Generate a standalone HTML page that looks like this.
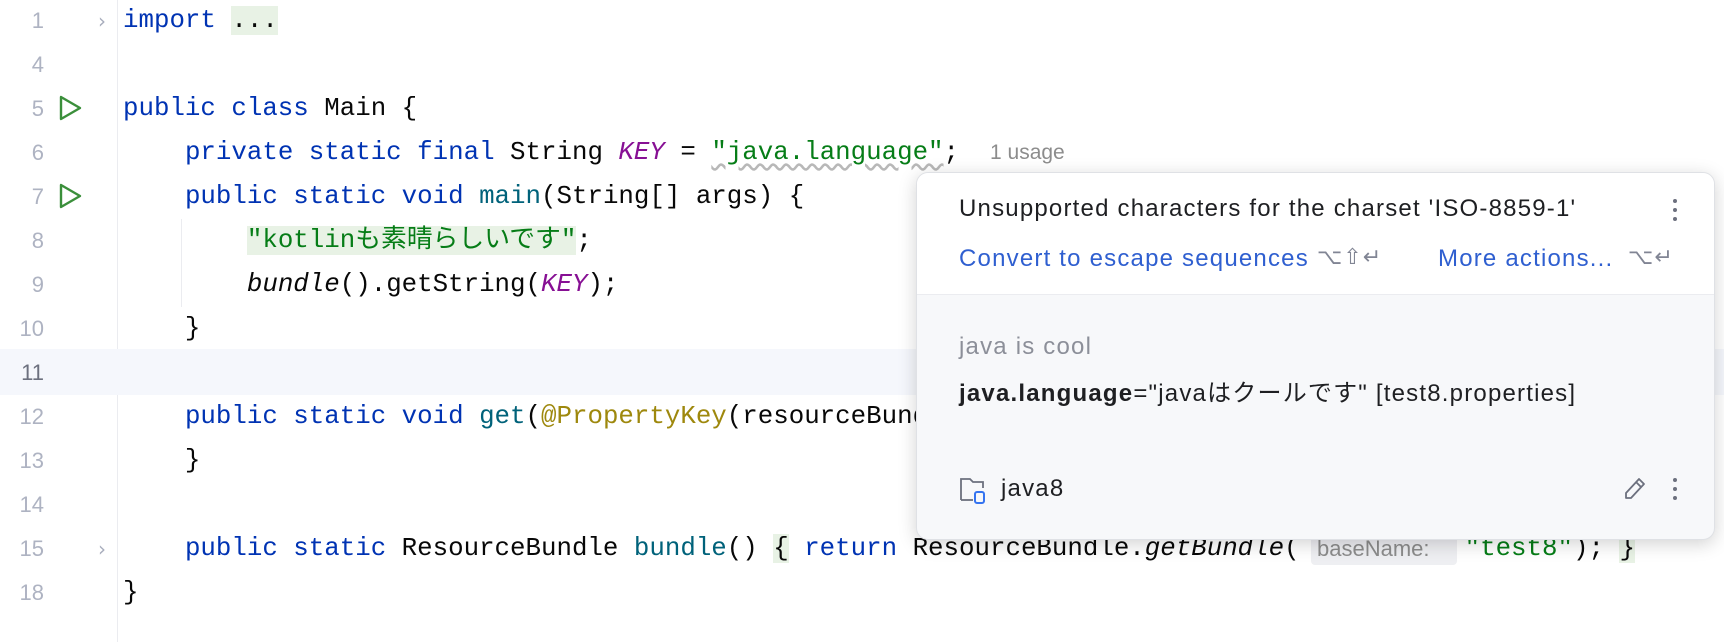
<!DOCTYPE html>
<html><head><meta charset="utf-8"><style>
body{margin:0;width:1724px;height:642px;background:#fff;position:relative;overflow:hidden;font-family:"Liberation Mono","Noto Sans CJK JP",monospace;}
.row{position:absolute;left:0;width:1724px;height:44px;line-height:44px;}
.ln{position:absolute;left:0;width:44px;text-align:right;color:#aeb3c2;font-size:22px;font-family:"Liberation Sans",sans-serif;}
.code{position:absolute;left:123px;font-size:25.8px;color:#080808;white-space:pre;}
.k{color:#0033b3}.m{color:#00627a}.s{color:#067d17}.c{color:#871094;font-style:italic}.a{color:#9e880d}.i{font-style:italic}
.fold{background:#e8f2e5}
.gut{position:absolute;left:117px;top:0;width:1px;height:642px;background:#ebecf0}
.play{position:absolute;left:58px}
.arr{position:absolute;left:98px;color:#a8adbd;font-size:20px;font-family:"DejaVu Sans",sans-serif}
.pop{position:absolute;left:916px;top:172px;width:797px;height:366px;border-radius:12px;background:#f7f8fa;box-shadow:0 4px 18px rgba(0,0,0,.18);border:1px solid #dfe1e5;overflow:hidden;font-family:"Liberation Sans","Noto Sans CJK JP",sans-serif;font-size:24px;letter-spacing:1.2px}
.hd{position:absolute;left:0;top:0;right:0;height:121px;background:#fff;border-bottom:1px solid #ebecf0}
.t{position:absolute;white-space:nowrap}
.sc{color:#818594;font-family:'DejaVu Sans',sans-serif;font-size:22px;letter-spacing:1px}
.dots{position:absolute;width:4px}
.dots i{display:block;width:4px;height:4px;border-radius:2px;background:#6c707e;margin-bottom:5px}
</style></head><body>
<div class="gut"></div>
<div style="position:absolute;left:181px;top:219px;width:1px;height:88px;background:#ebecf0"></div>

<div class="row" style="top:-1px"><span class="ln">1</span><span class="arr">›</span><span class="code"><span class="k">import</span> <span class="fold">...</span></span></div>
<div class="row" style="top:43px"><span class="ln">4</span></div>
<div class="row" style="top:87px"><span class="ln">5</span><svg class="play" style="top:7px" width="26" height="28" viewBox="0 0 26 28"><path d="M3 3 L22 14 L3 25 Z" fill="none" stroke="#3b8f3b" stroke-width="2.4" stroke-linejoin="round"/></svg><span class="code"><span class="k">public class</span> Main {</span></div>
<div class="row" style="top:131px"><span class="ln">6</span><span class="code">    <span class="k">private static final</span> String <span class="c">KEY</span> = <span class="s" style="text-decoration:underline wavy #b8b8b8;text-underline-offset:4px">"java.language"</span>;</span><span class="t" style="left:990px;color:#8c8c8c;font-family:'Liberation Sans',sans-serif;font-size:21px">1 usage</span></div>
<div class="row" style="top:175px"><span class="ln">7</span><svg class="play" style="top:7px" width="26" height="28" viewBox="0 0 26 28"><path d="M3 3 L22 14 L3 25 Z" fill="none" stroke="#3b8f3b" stroke-width="2.4" stroke-linejoin="round"/></svg><span class="code">    <span class="k">public static void</span> <span class="m">main</span>(String[] args) {</span></div>
<div class="row" style="top:219px"><span class="ln">8</span><span class="code">        <span class="fold" style="color:#067d17">"kotlinも素晴らしいです"</span>;</span></div>
<div class="row" style="top:263px"><span class="ln">9</span><span class="code">        <span class="i">bundle</span>().getString(<span class="c">KEY</span>);</span></div>
<div class="row" style="top:307px"><span class="ln">10</span><span class="code">    }</span></div>
<div class="row" style="top:349px;height:46px;line-height:48px;background:#f5f7fc"><span class="ln" style="color:#6c707e">11</span></div>
<div class="row" style="top:395px"><span class="ln">12</span><span class="code">    <span class="k">public static void</span> <span class="m">get</span>(<span class="a">@PropertyKey</span>(resourceBundle = <span class="s">"test8"</span>) String key) {</span></div>
<div class="row" style="top:439px"><span class="ln">13</span><span class="code">    }</span></div>
<div class="row" style="top:483px"><span class="ln">14</span></div>
<div class="row" style="top:527px"><span class="ln">15</span><span class="arr">›</span><span class="code">    <span class="k">public static</span> ResourceBundle <span class="m">bundle</span>() <span class="fold">{</span> <span class="k">return</span> ResourceBundle.<span class="i">getBundle</span>(<span style="display:inline-block;width:165px"></span><span class="s">"test8"</span>); <span class="fold">}</span></span><span class="t" style="left:1311px;top:6px;height:32px;line-height:32px;width:134px;padding:0 6px;background:#eeeff2;border-radius:4px;color:#8c8c8c;font-family:'Liberation Sans',sans-serif;font-size:22px">baseName:</span></div>
<div class="row" style="top:571px"><span class="ln">18</span><span class="code">}</span></div>

<div class="pop">
 <div class="hd"></div>
 <span class="t" style="left:42px;top:22px;color:#1e1f22">Unsupported characters for the charset 'ISO-8859-1'</span>
 <div class="dots" style="left:756px;top:26px"><i></i><i></i><i></i></div>
 <span class="t" style="left:42px;top:72px;color:#2f5fd0">Convert to escape sequences</span>
 <span class="t sc" style="left:400px;top:72px">⌥⇧↵</span>
 <span class="t" style="left:521px;top:72px;color:#2f5fd0">More actions...</span>
 <span class="t sc" style="left:711px;top:72px">⌥↵</span>
 <span class="t" style="left:42px;top:160px;color:#8c8f99">java is cool</span>
 <span class="t" style="left:42px;top:200px;color:#1e1f22"><b>java.language</b>="javaはクールです" [test8.properties]</span>
 <svg class="t" style="left:42px;top:302px" width="32" height="32" viewBox="0 0 32 32"><path d="M2 25 V4 h9 l3 3 h10 v6" fill="none" stroke="#6c707e" stroke-width="1.8"/><path d="M2 25 h12" stroke="#6c707e" stroke-width="1.8"/><rect x="16" y="17" width="9" height="11" rx="2" fill="none" stroke="#3574f0" stroke-width="2"/></svg>
 <span class="t" style="left:84px;top:302px;color:#1e1f22">java8</span>
 <svg class="t" style="left:704px;top:302px" width="28" height="28" viewBox="0 0 28 28"><path d="M5 23 L5 18 L18 4 L23 9 L10 23 Z M15 7 L20 12" fill="none" stroke="#6c707e" stroke-width="1.8" stroke-linejoin="round"/></svg>
 <div class="dots" style="left:756px;top:305px"><i></i><i></i><i></i></div>
</div>
</body></html>
